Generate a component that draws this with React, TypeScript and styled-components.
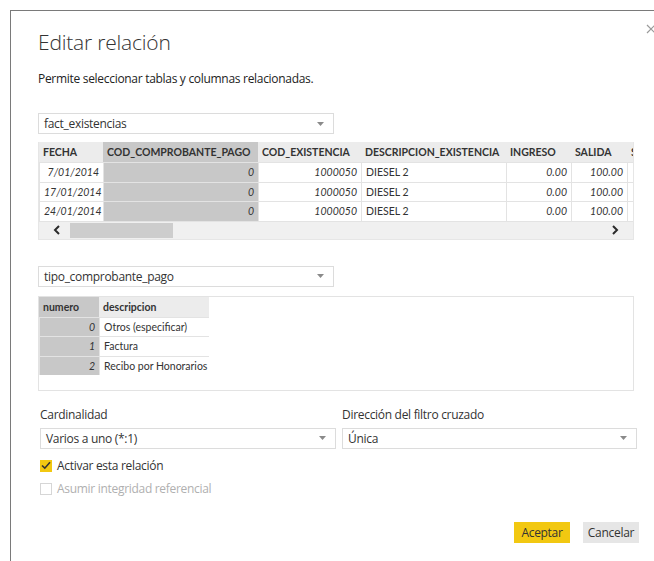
import React from "react";
import styled, { createGlobalStyle } from "styled-components";

const GlobalStyle = createGlobalStyle`
  html, body {
    margin: 0;
    padding: 0;
    background: #ffffff;
  }
  body {
    font-family: "Open Sans", "Noto Sans", sans-serif;
    letter-spacing: -0.3px;
    color: #333333;
  }
`;

type Col = { name: string; width: number; selected?: boolean; align?: "left" | "right"; italic?: boolean };

const FACT_COLUMNS: Col[] = [
  { name: "FECHA", width: 64, align: "right", italic: true },
  { name: "COD_COMPROBANTE_PAGO", width: 155, selected: true, align: "right", italic: true },
  { name: "COD_EXISTENCIA", width: 103, align: "right", italic: true },
  { name: "DESCRIPCION_EXISTENCIA", width: 145 },
  { name: "INGRESO", width: 65, align: "right", italic: true },
  { name: "SALIDA", width: 56, align: "right", italic: true },
  { name: "SALDO", width: 60, align: "right", italic: true },
];

const FACT_ROWS = [
  ["7/01/2014", "0", "1000050", "DIESEL 2", "0.00", "100.00", "0.00"],
  ["17/01/2014", "0", "1000050", "DIESEL 2", "0.00", "100.00", "0.00"],
  ["24/01/2014", "0", "1000050", "DIESEL 2", "0.00", "100.00", "0.00"],
];

const TIPO_COLUMNS: Col[] = [
  { name: "numero", width: 60, selected: true, align: "right", italic: true },
  { name: "descripcion", width: 110 },
];

const TIPO_ROWS = [
  ["0", "Otros (especificar)"],
  ["1", "Factura"],
  ["2", "Recibo por Honorarios"],
];

function Caret() {
  return (
    <CaretIcon width="7" height="4" viewBox="0 0 7 4">
      <path d="M0 0 L7 0 L3.5 4 Z" fill="#8a8a8a" />
    </CaretIcon>
  );
}

function Select({ value, width }: { value: string; width: number }) {
  return (
    <SelectBox $width={width}>
      <span>{value}</span>
      <Caret />
    </SelectBox>
  );
}

function PreviewGrid({ columns, rows }: { columns: Col[]; rows: string[][] }) {
  const template = columns.map((c) => `${c.width}px`).join(" ");
  return (
    <Grid style={{ gridTemplateColumns: template }}>
      {columns.map((c) => (
        <HeadCell key={c.name} $selected={c.selected}>
          {c.name}
        </HeadCell>
      ))}
      {rows.map((row, r) =>
        row.map((v, i) => (
          <Cell
            key={`${r}-${i}`}
            $selected={columns[i].selected}
            $align={columns[i].align}
            $italic={columns[i].italic}
          >
            {v}
          </Cell>
        ))
      )}
    </Grid>
  );
}

function Chevron({ dir }: { dir: "left" | "right" }) {
  return (
    <svg width="8" height="10" viewBox="0 0 8 10">
      <path
        d={dir === "left" ? "M6 1 L2 5 L6 9" : "M2 1 L6 5 L2 9"}
        fill="none"
        stroke="#2b2b2b"
        strokeWidth="2"
      />
    </svg>
  );
}

export default function App() {
  return (
    <>
      <GlobalStyle />
      <Dialog>
        <CloseButton aria-label="Cerrar">
          <svg width="10" height="10" viewBox="0 0 10 10">
            <path d="M1 1 L9 9 M9 1 L1 9" stroke="#9a9a9a" strokeWidth="1.2" />
          </svg>
        </CloseButton>
        <Title>Editar relación</Title>
        <Subtitle>Permite seleccionar tablas y columnas relacionadas.</Subtitle>

        <Select value="fact_existencias" width={296} />
        <TablePanel>
          <GridClip>
            <PreviewGrid columns={FACT_COLUMNS} rows={FACT_ROWS} />
          </GridClip>
          <ScrollBar>
            <Chevron dir="left" />
            <Thumb />
            <Spacer />
            <Chevron dir="right" />
          </ScrollBar>
        </TablePanel>

        <SecondSelect>
          <Select value="tipo_comprobante_pago" width={296} />
        </SecondSelect>
        <LookupPanel>
          <PreviewGrid columns={TIPO_COLUMNS} rows={TIPO_ROWS} />
        </LookupPanel>

        <FieldsRow>
          <Field>
            <Label>Cardinalidad</Label>
            <Select value="Varios a uno (*:1)" width={296} />
          </Field>
          <Field>
            <Label>Dirección del filtro cruzado</Label>
            <Select value="Única" width={295} />
          </Field>
        </FieldsRow>

        <CheckRow>
          <Box $checked>
            <svg width="10" height="9" viewBox="0 0 10 9">
              <path d="M1 4.5 L3.8 7.2 L9 1.2" fill="none" stroke="#333" strokeWidth="1.6" />
            </svg>
          </Box>
          Activar esta relación
        </CheckRow>
        <CheckRow $disabled>
          <Box />
          Asumir integridad referencial
        </CheckRow>

        <Footer>
          <Button $primary>Aceptar</Button>
          <Button>Cancelar</Button>
        </Footer>
      </Dialog>
    </>
  );
}

const Dialog = styled.div`
  position: relative;
  box-sizing: border-box;
  margin: 10px 0 0 10px;
  height: 551px;
  border-top: 1px solid #7a7a7a;
  border-left: 1px solid #7a7a7a;
  padding: 16px 0 0 27px;
  display: flex;
  flex-direction: column;
  align-items: flex-start;
`;

const CloseButton = styled.div`
  position: absolute;
  top: 6px;
  right: -2px;
  width: 10px;
  height: 10px;
`;

const Title = styled.h1`
  margin: 0;
  font-size: 21px;
  font-weight: 300;
  line-height: 30px;
  letter-spacing: -0.2px;
  color: #333;
`;

const Subtitle = styled.p`
  margin: 14px 0 26px;
  font-size: 12px;
  line-height: 16px;
  color: #222;
`;

const SelectBox = styled.div<{ $width: number }>`
  box-sizing: border-box;
  width: ${(p) => p.$width}px;
  height: 21px;
  border: 1px solid #dcdcdc;
  background: #fff;
  display: flex;
  align-items: center;
  justify-content: space-between;
  padding: 0 9px 0 5px;
  font-size: 12px;
  color: #333;
`;

const CaretIcon = styled.svg`
  flex: none;
`;

const TablePanel = styled.div`
  margin-top: 8px;
  width: 596px;
  box-sizing: border-box;
  border: 1px solid #e6e6e6;
  border-top: none;
`;

const GridClip = styled.div`
  overflow: hidden;
  background: #f0f0f0;
`;

const Grid = styled.div`
  display: grid;
  font-family: Lato, "Open Sans", sans-serif;
  font-size: 10.5px;
  letter-spacing: 0;
  width: max-content;
`;

const HeadCell = styled.div<{ $selected?: boolean }>`
  height: 20px;
  line-height: 20px;
  padding: 0 4px;
  font-weight: 700;
  color: #333;
  white-space: nowrap;
  overflow: hidden;
  background: ${(p) => (p.$selected ? "#c8c8c8" : "#ececec")};
  box-sizing: border-box;
`;

const Cell = styled.div<{ $selected?: boolean; $align?: string; $italic?: boolean }>`
  height: 19.5px;
  line-height: 18px;
  padding: 0 4px;
  box-sizing: border-box;
  white-space: nowrap;
  overflow: hidden;
  text-align: ${(p) => p.$align || "left"};
  font-style: ${(p) => (p.$italic ? "italic" : "normal")};
  color: #333;
  background: ${(p) => (p.$selected ? "#c8c8c8" : "#fff")};
  border-top: 1px solid #e3e3e3;
  border-left: 1px solid #e3e3e3;
`;

const ScrollBar = styled.div`
  height: 17px;
  background: #f0f0f0;
  display: flex;
  align-items: center;
  padding: 0 14px;
  border-top: 1px solid #e3e3e3;
`;

const Thumb = styled.div`
  width: 103px;
  height: 15px;
  margin-left: 9px;
  background: #cdcdcd;
`;

const Spacer = styled.div`
  flex: 1;
`;

const SecondSelect = styled.div`
  margin-top: 26px;
`;

const LookupPanel = styled.div`
  margin-top: 9px;
  box-sizing: border-box;
  width: 596px;
  height: 95px;
  border: 1px solid #e3e3e3;
  background: #fff;
`;

const FieldsRow = styled.div`
  margin-top: 16px;
  margin-left: 2px;
  display: flex;
  gap: 6px;
`;

const Field = styled.div`
  display: flex;
  flex-direction: column;
  gap: 5px;
`;

const Label = styled.div`
  font-size: 12px;
  line-height: 16px;
  color: #333;
`;

const CheckRow = styled.label<{ $disabled?: boolean }>`
  margin: 10px 0 0 2px;
  display: flex;
  align-items: center;
  gap: 5px;
  font-size: 12px;
  line-height: 14px;
  color: ${(p) => (p.$disabled ? "#b0b0b0" : "#333")};
  & + & {
    margin-top: 9px;
  }
`;

const Box = styled.span<{ $checked?: boolean }>`
  box-sizing: border-box;
  width: 12px;
  height: 12px;
  display: inline-flex;
  align-items: center;
  justify-content: center;
  background: ${(p) => (p.$checked ? "#f2c811" : "#fff")};
  border: 1px solid ${(p) => (p.$checked ? "#f2c811" : "#d6d6d6")};
`;

const Footer = styled.div`
  margin-top: 26px;
  align-self: flex-end;
  margin-right: 15px;
  display: flex;
  gap: 13px;
`;

const Button = styled.button<{ $primary?: boolean }>`
  width: 56px;
  height: 21px;
  border: none;
  padding: 0;
  font-family: inherit;
  font-size: 12px;
  letter-spacing: -0.3px;
  color: #333;
  background: ${(p) => (p.$primary ? "#f2c811" : "#e6e6e6")};
`;
